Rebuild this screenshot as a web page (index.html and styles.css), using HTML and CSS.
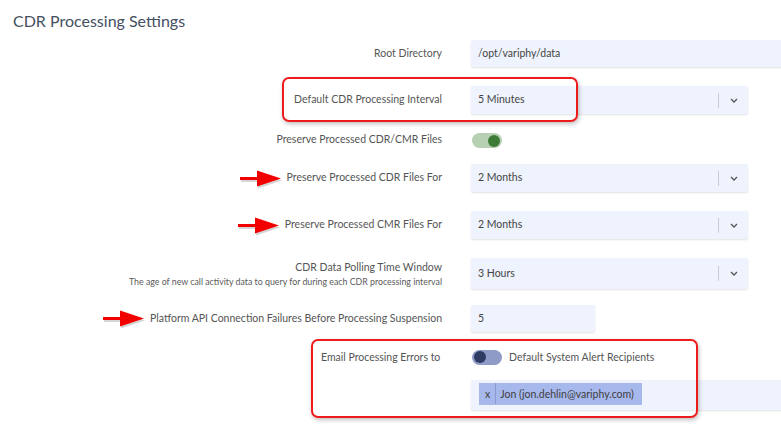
FILE: index.html
```html
<!DOCTYPE html>
<html lang="en">
<head>
<meta charset="UTF-8">
<title>CDR Processing Settings</title>
<link rel="stylesheet" href="styles.css">
</head>
<body>
	<h2 class="title">CDR Processing Settings</h2>

	<div class="settings">
		<div class="row row-first">
			<label class="lbl">Root Directory</label>
			<div class="field wide">/opt/variphy/data</div>
		</div>

		<div class="row mark-wrap">
			<label class="lbl">Default CDR Processing Interval</label>
			<div class="field select">
				<span class="val">5 Minutes</span>
				<span class="sep"></span>
				<svg class="chev" width="8" height="5" viewBox="0 0 8 5"><path d="M1 1l3 3 3-3" fill="none" stroke="#555" stroke-width="1.3"/></svg>
			</div>
			<div class="mark mark-one"></div>
		</div>

		<div class="row row-toggle">
			<label class="lbl">Preserve Processed CDR/CMR Files</label>
			<div><span class="toggle on"><span class="knob"></span></span></div>
		</div>

		<div class="row">
			<label class="lbl">
				<svg class="arrow" width="44" height="22" viewBox="0 0 44 22"><path d="M1 9h17V2.5l24 8L18 18.5V12H1z" fill="#888" opacity=".35" transform="translate(1 2)"/><path d="M1 9h17V2.5l24 8L18 18.5V12H1z" fill="#f20000"/></svg>Preserve Processed CDR Files For</label>
			<div class="field select">
				<span class="val">2 Months</span>
				<span class="sep"></span>
				<svg class="chev" width="8" height="5" viewBox="0 0 8 5"><path d="M1 1l3 3 3-3" fill="none" stroke="#555" stroke-width="1.3"/></svg>
			</div>
		</div>

		<div class="row">
			<label class="lbl">
				<svg class="arrow" width="44" height="22" viewBox="0 0 44 22"><path d="M1 9h17V2.5l24 8L18 18.5V12H1z" fill="#888" opacity=".35" transform="translate(1 2)"/><path d="M1 9h17V2.5l24 8L18 18.5V12H1z" fill="#f20000"/></svg>Preserve Processed CMR Files For</label>
			<div class="field select">
				<span class="val">2 Months</span>
				<span class="sep"></span>
				<svg class="chev" width="8" height="5" viewBox="0 0 8 5"><path d="M1 1l3 3 3-3" fill="none" stroke="#555" stroke-width="1.3"/></svg>
			</div>
		</div>

		<div class="row row-help">
			<label class="lbl">CDR Data Polling Time Window
				<small class="help">The age of new call activity data to query for during each CDR processing interval</small>
			</label>
			<div class="field select">
				<span class="val">3 Hours</span>
				<span class="sep"></span>
				<svg class="chev" width="8" height="5" viewBox="0 0 8 5"><path d="M1 1l3 3 3-3" fill="none" stroke="#555" stroke-width="1.3"/></svg>
			</div>
		</div>

		<div class="row row-short">
			<label class="lbl">
				<svg class="arrow" width="44" height="22" viewBox="0 0 44 22"><path d="M1 9h17V2.5l24 8L18 18.5V12H1z" fill="#888" opacity=".35" transform="translate(1 2)"/><path d="M1 9h17V2.5l24 8L18 18.5V12H1z" fill="#f20000"/></svg>Platform API Connection Failures Before Processing Suspension</label>
			<div class="field short">5</div>
		</div>

		<div class="group mark-wrap">
			<div class="row row-toggle2">
				<label class="lbl lbl-left">Email Processing Errors to</label>
				<div class="toggle-line"><span class="toggle off"><span class="knob"></span></span>Default System Alert Recipients</div>
			</div>
			<div class="row row-tags">
				<span></span>
				<div class="field wide tags"><span class="tag"><span class="tag-x">x</span><span class="tag-txt">Jon (jon.dehlin@variphy.com)</span></span></div>
			</div>
			<div class="mark mark-two"></div>
		</div>
	</div>
</body>
</html>
```

FILE: styles.css
```css
*{margin: 0; padding: 0; box-sizing: border-box;}
body{font-family: Lato, "Open Sans", sans-serif; color: #555; background: #fff; overflow: hidden;}

.title{font-size: 16px; font-weight: 400; color: #45505f; padding: 11px 0 0 13px; height: 40px;}

.settings{display: flex; flex-direction: column;}
.row{display: grid; grid-template-columns: 442px 1fr; column-gap: 29px; align-items: center; height: 28px; margin-bottom: 19px;}
.row-first{height: 27px;}
.mark-wrap{position: relative;}

.lbl{font-size: 10.5px; text-align: right; color: #555; display: flex; justify-content: flex-end; align-items: center; padding-bottom: 2px;}
.lbl-left{justify-content: flex-start; padding-left: 321px;}
.arrow{margin-right: 4px; margin-top: 3px;}

.field{background: #eef3fd; height: 100%; display: flex; align-items: center; padding: 0 0 2px 7px; font-size: 10.5px; color: #444;
	box-shadow: 0 1px 2px rgba(0,0,0,.12); border-radius: 2px;}
.wide{margin-right: -10px;}
.select{width: 277px;}
.select .val{flex: 1;}
.sep{width: 1px; height: 15px; background: #c9ccd2; margin-top: 2px;}
.chev{margin: 2px 10px 0 11px;}
.short{width: 124px;}

.row-toggle{margin-top: -7px; margin-bottom: 10px;}
.toggle{display: inline-flex; align-items: center; width: 30px; height: 15px; border-radius: 8px; padding: 0 2px;}
.toggle .knob{width: 12px; height: 12px; border-radius: 50%;}
.toggle.on{background: #b7cfb3; justify-content: flex-end; margin-left: 1px;}
.toggle.on .knob{background: #3e7b36;}
.toggle.off{background: #8e9bc6; margin-left: 1px;}
.toggle.off .knob{background: #2e3b62;}

.row-help{align-items: start;}
.row-help .lbl{flex-direction: column; align-items: flex-end; padding-top: 3px;}
.help{font-size: 8.8px; color: #5a5a5a; margin-top: 3px;}

.row-short{height: 27px; margin-top: 0; margin-bottom: 10px;}

.row-toggle2{margin-bottom: 10px; padding-top: 3px;}
.toggle-line{display: flex; align-items: center; gap: 7px; font-size: 10.5px; color: #555; padding-bottom: 1px;}
.row-tags{height: 30px;}
.tags{padding-left: 8px;}
.tag{display: flex; align-items: center; height: 22px; background: #a7b8ec; color: #3e3e3e; font-size: 10.5px; padding-bottom: 1px;}
.tag-x{padding: 0 5px 0 6px; border-right: 1px solid #8a9ad0; height: 100%; display: flex; align-items: center;}
.tag-txt{padding: 0 8px 0 4px;}

/* red annotation boxes */
.mark{position: absolute; border: 2px solid #ee1b1d; border-radius: 7px; box-shadow: 1px 2px 4px rgba(0,0,0,.25); pointer-events: none;}
.mark-one{left: 282px; top: -9px; width: 296px; height: 45px;}
.mark-two{left: 311px; top: -3px; width: 387px; height: 79px;}
```
